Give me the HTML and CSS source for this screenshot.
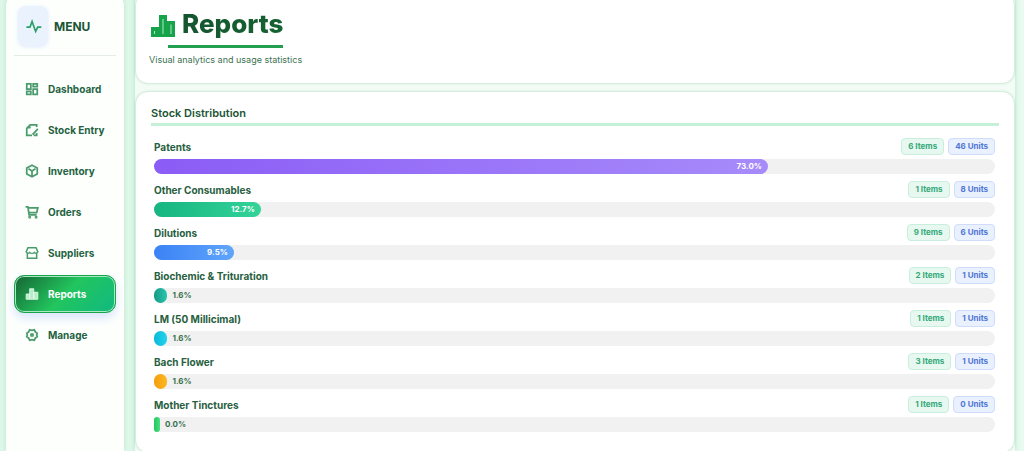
FILE: index.html
```html
<!DOCTYPE html>
<html lang="en">
<head>
    <meta charset="UTF-8">
    <meta name="viewport" content="width=device-width, initial-scale=1.0">
    <title>Reports</title>
    <link rel="stylesheet" href="styles.css">
</head>
<body>
    <div class="app">
        <aside class="sidebar">
            <div class="brand">
                <span class="brand-logo">
                    <svg width="17" height="17" viewBox="0 0 24 24" fill="none" stroke="currentColor" stroke-width="2.4"><path d="M2 13h5l3-8 5 14 3-6h5"/></svg>
                </span>
                <span class="brand-name">MENU</span>
            </div>
            <nav class="nav">
                <a href="#" class="nav-link">
                    <svg class="icon" viewBox="0 0 24 24"><path d="M3 3h7v9H3zM14 3h7v5h-7zM14 12h7v9h-7zM3 16h7v5H3z"/></svg>
                    Dashboard
                </a>
                <a href="#" class="nav-link">
                    <svg class="icon" viewBox="0 0 24 24"><path d="M20 7V3H9L3 9v12h9M8 3v5H3M22 10l-9 10M15 21h5v-4"/></svg>
                    Stock Entry
                </a>
                <a href="#" class="nav-link">
                    <svg class="icon" viewBox="0 0 24 24"><path d="M12 2l9 5v10l-9 5-9-5V7zM6 8l6 4 6-4M12 12v8"/></svg>
                    Inventory
                </a>
                <a href="#" class="nav-link">
                    <svg class="icon" viewBox="0 0 24 24"><path d="M1 3h4l2 14h13M6 5h16l-2 8H7"/><circle cx="8" cy="21" r="1"/><circle cx="19" cy="21" r="1"/></svg>
                    Orders
                </a>
                <a href="#" class="nav-link">
                    <svg class="icon store" viewBox="0 0 24 24"><path d="M4 12v9h16v-9M5 3h14l3 7c-2 3-4 3-6 1-2 2-6 2-8 0-2 2-4 2-6-1z"/></svg>
                    Suppliers
                </a>
                <a href="#" class="nav-link active">
                    <svg class="icon chart" viewBox="0 0 24 24"><path d="M2 12h6v9H2zM8 3h7v18H8zM15 9h7v12h-7z"/></svg>
                    Reports
                </a>
                <a href="#" class="nav-link">
                    <svg class="icon" viewBox="0 0 24 24"><path d="M8 3l4 1 4-1 2 4 3 2-1 3 1 3-3 2-2 4-4-1-4 1-2-4-3-2 1-3-1-3 3-2z"/><circle cx="12" cy="12" r="2"/></svg>
                    Manage
                </a>
            </nav>
        </aside>

        <main class="content">
            <header class="card page-header">
                <div class="title-row">
                    <svg class="title-icon" viewBox="0 0 24 22"><path d="M0 12h8V0h8v6h8v16H0z" fill="#16a34a"/><path d="M3.500 16v3M12 4v15M20 9.500v9.500" stroke="#a7ecc0" stroke-width="1"/></svg>
                    <h1>Reports</h1>
                </div>
                <p class="subtitle">Visual analytics and usage statistics</p>
            </header>

            <section class="card stock">
                <h2>Stock Distribution</h2>
                <div class="rows">
                    <div class="row">
                        <div class="row-head"><h3>Patents</h3><span class="badge items">6 Items</span><span class="badge units">46 Units</span></div>
                        <div class="track"><div class="fill violet" style="width: 73%">73.0%</div></div>
                    </div>
                    <div class="row">
                        <div class="row-head"><h3>Other Consumables</h3><span class="badge items">1 Items</span><span class="badge units">8 Units</span></div>
                        <div class="track"><div class="fill green" style="width: 12.7%">12.7%</div></div>
                    </div>
                    <div class="row">
                        <div class="row-head"><h3>Dilutions</h3><span class="badge items">9 Items</span><span class="badge units">6 Units</span></div>
                        <div class="track"><div class="fill blue" style="width: 9.5%">9.5%</div></div>
                    </div>
                    <div class="row">
                        <div class="row-head"><h3>Biochemic &amp; Trituration</h3><span class="badge items">2 Items</span><span class="badge units">1 Units</span></div>
                        <div class="track"><div class="fill teal" style="width: 1.6%"></div><span class="percent">1.6%</span></div>
                    </div>
                    <div class="row">
                        <div class="row-head"><h3>LM (50 Millicimal)</h3><span class="badge items">1 Items</span><span class="badge units">1 Units</span></div>
                        <div class="track"><div class="fill cyan" style="width: 1.6%"></div><span class="percent">1.6%</span></div>
                    </div>
                    <div class="row">
                        <div class="row-head"><h3>Bach Flower</h3><span class="badge items">3 Items</span><span class="badge units">1 Units</span></div>
                        <div class="track"><div class="fill amber" style="width: 1.6%"></div><span class="percent">1.6%</span></div>
                    </div>
                    <div class="row">
                        <div class="row-head"><h3>Mother Tinctures</h3><span class="badge items">1 Items</span><span class="badge units">0 Units</span></div>
                        <div class="track"><div class="fill lime" style="width: 0%"></div><span class="percent">0.0%</span></div>
                    </div>
                </div>
            </section>
        </main>
    </div>
</body>
</html>
```

FILE: styles.css
```css
* {
    box-sizing: border-box;
}
body {
    margin: 0;
    font-family: Inter, "Liberation Sans", sans-serif;
    color: #1b5535;
    background: linear-gradient(90deg, #dcf7e7, #e6faee 60%, #e9faf0);
}
h1, h2, h3, p {
    margin: 0;
}
.app {
    display: flex;
    gap: 11px;
    height: 100vh;
    padding: 0 9px 0 6px;
    overflow: hidden;
}

/* sidebar */
.sidebar {
    flex: 0 0 118px;
    min-width: 0;
    margin-top: -8px;
    padding: 14px 8px;
    background: #fdfffd;
    border-radius: 14px 14px 0 0;
    box-shadow: 0 0 4px rgba(22, 101, 52, 0.15);
}
.brand {
    display: flex;
    align-items: center;
    gap: 6px;
    padding: 0 4px 9px;
    border-bottom: 1px solid #e3ece6;
}
.brand-logo {
    display: flex;
    align-items: center;
    justify-content: center;
    width: 30px;
    height: 40px;
    border-radius: 8px;
    background: #eaf2fe;
    color: #2ba066;
    box-shadow: 0 1px 4px #dfe9fd;
}
.brand-name {
    font-size: 12px;
    font-weight: 700;
}
.nav {
    display: flex;
    flex-direction: column;
    gap: 3px;
    margin-top: 14px;
}
.nav-link {
    display: flex;
    align-items: center;
    gap: 9px;
    height: 38px;
    padding: 0 11px;
    border-radius: 10px;
    color: #24623f;
    font-size: 10px;
    font-weight: 700;
    text-decoration: none;
    white-space: nowrap;
}
.icon {
    flex: none;
    width: 14px;
    height: 14px;
    fill: none;
    stroke: #4a9c6d;
    stroke-width: 3;
}
.icon.store {
    stroke-width: 2.6;
}
.nav-link.active {
    color: #fff;
    background: linear-gradient(135deg, #166534, #22c55e 50%, #10b981);
    border: 1px solid #16a34a;
    padding: 0 10px;
    box-shadow: inset 0 0 0 1px #a9e8c1, 0 5px 10px #d9e4fd;
}
.icon.chart {
    fill: #b5edc9;
    stroke: #e2f9e9;
    stroke-width: 1.5;
}

/* content */
.content {
    flex: 1;
    min-width: 0;
    margin-top: -8px;
    background: #f3fcf6;
    box-shadow: 0 0 5px #b4e5c7;
}
.card {
    background: #fff;
    border: 1px solid #d3eedd;
    border-radius: 13px;
    box-shadow: 0 0 3px rgba(22, 101, 52, 0.1);
}
.page-header {
    height: 92px;
    padding: 15px 13px;
}
.title-row {
    display: flex;
    width: max-content;
    gap: 7px;
    height: 40px;
    background: linear-gradient(#22a050, #22a050) 100% 100% / 115px 3px no-repeat;
}
.title-icon {
    width: 24px;
    height: 22px;
    margin: 7px 0 0 2px;
}
h1 {
    font-size: 26px;
    line-height: 32px;
    font-weight: 800;
    background: linear-gradient(135deg, #14532d, #166534);
    -webkit-background-clip: text;
    background-clip: text;
    color: transparent;
}
.subtitle {
    margin-top: 6px;
    font-size: 9px;
    line-height: 12px;
    color: #3c7352;
}
.stock {
    margin-top: 7px;
    padding: 14px 15px 20px;
}
h2 {
    padding-bottom: 2px;
    border-bottom: 3px solid #c5f0d8;
    font-size: 11px;
    line-height: 15px;
    font-weight: 600;
}
.rows {
    display: flex;
    flex-direction: column;
    gap: 7px;
    padding: 12px 4px 0 3px;
}
.row-head {
    display: flex;
    align-items: center;
    gap: 4px;
    height: 17px;
    margin-bottom: 4px;
}
h3 {
    margin-right: auto;
    font-size: 10px;
    font-weight: 700;
    color: #27603e;
}
.badge {
    height: 17px;
    padding: 0 6px;
    border: 1px solid;
    border-radius: 4px;
    font-size: 8px;
    line-height: 15px;
    font-weight: 700;
}
.items {
    color: #35a878;
    background: #e6f8f0;
    border-color: #c9eedd;
}
.units {
    color: #4f76d3;
    background: #e9f0fe;
    border-color: #cfddfa;
}
.track {
    display: flex;
    height: 15px;
    background: #f1f1f1;
    border-radius: 8px;
}
.fill {
    flex: none;
    min-width: 6px;
    padding-right: 6px;
    border-radius: 8px;
    color: #fff;
    font-size: 8px;
    line-height: 15px;
    font-weight: 700;
    text-align: right;
}
.percent {
    margin-left: 5px;
    font-size: 8px;
    line-height: 15px;
    font-weight: 700;
    color: #37704d;
}
.violet { background: linear-gradient(90deg, #8b5cf6, #a78bfa); }
.green { background: linear-gradient(90deg, #16b581, #34d399); }
.blue { background: linear-gradient(90deg, #3b82f6, #60a5fa); }
.teal { background: linear-gradient(90deg, #159a84, #2bc4ae); }
.cyan { background: linear-gradient(90deg, #0bb9d8, #22d3ee); }
.amber { background: linear-gradient(90deg, #f59e0b, #fbb824); }
.lime { background: linear-gradient(90deg, #22c55e, #4ade80); }
```
